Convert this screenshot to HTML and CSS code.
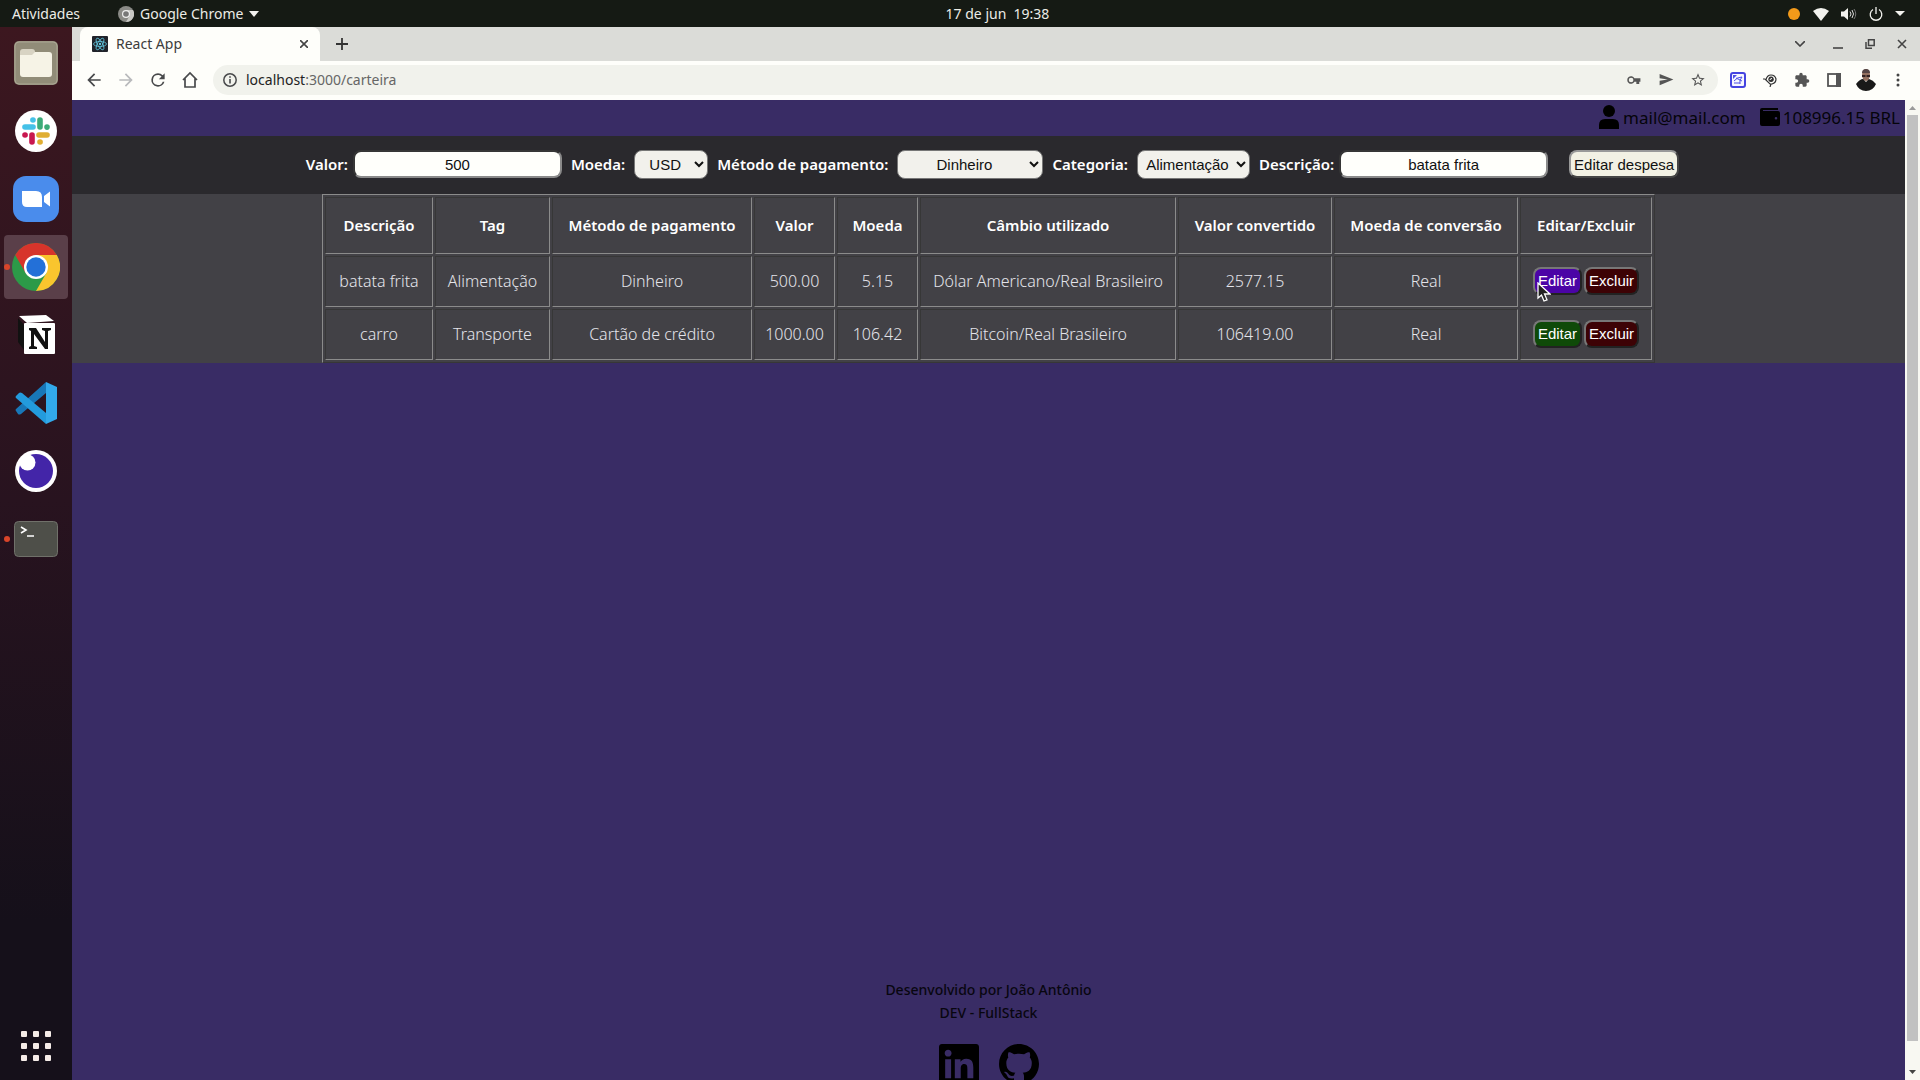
FILE: index.html
```html
<!DOCTYPE html>
<html lang="pt-BR">
<head>
<meta charset="utf-8">
<title>React App</title>
<meta name="viewport" content="width=device-width, initial-scale=1">
<link rel="stylesheet" href="styles.css">
</head>
<body>
<div class="desktop">
  <header class="topbar">
    <div class="topbar-left">
      <span>Atividades</span>
      <span class="app-menu">
        <svg width="16" height="16" viewBox="0 0 16 16"><circle cx="8" cy="8" r="8" fill="#8a8a86"/><path d="M8 4h7A8 8 0 0 1 8 16l3.500-6z" fill="#c8c8c4"/><circle cx="8" cy="8" r="4" fill="#eee"/><circle cx="8" cy="8" r="2.800" fill="#777"/></svg>
        Google Chrome
        <svg width="10" height="6" viewBox="0 0 10 6"><path d="M0 0h10L5 6z" fill="#f2f2ee"/></svg>
      </span>
    </div>
    <time class="clock">17 de jun&nbsp; 19:38</time>
    <div class="topbar-right">
      <svg width="14" height="14" viewBox="0 0 14 14"><circle cx="7" cy="7" r="6" fill="#f39a1a"/></svg>
      <svg width="16" height="14" viewBox="0 0 16 14"><path d="M0 4Q8-2 16 4L8 14z" fill="#f2f2ee"/></svg>
      <svg width="16" height="14" viewBox="0 0 16 14"><path d="M0 4.500h3L7 1v12L3 9.500H0z" fill="#f2f2ee"/><path d="M9 4.500q2 2.500 0 5M11 3q3 4 0 8" fill="none" stroke="#ddd"/><path d="M13 2q3.500 5 0 10" fill="none" stroke="#777"/></svg>
      <svg width="14" height="14" viewBox="0 0 14 14"><path d="M4 2.500a5.800 5.800 0 1 0 6 0M7 0v7" fill="none" stroke="#f2f2ee" stroke-width="1.300"/></svg>
      <svg width="10" height="6" viewBox="0 0 10 6"><path d="M0 0h10L5 5z" fill="#f2f2ee"/></svg>
    </div>
  </header>

  <nav class="dock" aria-label="Dock">
    <div class="dock-item"><svg width="44" height="44" viewBox="0 0 44 44"><rect width="44" height="44" rx="5" fill="#918c78"/><rect x="1" y="1" width="42" height="42" rx="4" fill="none" stroke="#aaa693"/><rect x="6" y="11" width="32" height="25" rx="3" fill="#f6f3e6"/><path d="M6 11q0-3 3-3h9q3 0 3 3l-3 3H6z" fill="#d8d3c3"/></svg></div>
    <div class="dock-item"><svg width="42" height="42" viewBox="0 0 42 42"><circle cx="21" cy="21" r="21" fill="#fff"/><g stroke-width="5.600" stroke-linecap="round"><path d="M25 10v7" stroke="#3cab78"/><path d="M32 17v.1" stroke="#3cab78"/><path d="M10 17h8" stroke="#45c1e8"/><path d="M18 10h-.1" stroke="#45c1e8"/><path d="M17 25v7" stroke="#c8174f"/><path d="M10 25h.1" stroke="#c8174f"/><path d="M24 25h8" stroke="#e0ae32"/><path d="M25 32h.1" stroke="#e0ae32"/></g></svg></div>
    <div class="dock-item"><svg width="46" height="46" viewBox="0 0 46 46"><rect width="46" height="46" rx="13" fill="#4a8cec"/><path d="M9 15h14q6 0 6 6v10H14q-5 0-5-5zM31 20l6-4.500v15L31 26z" fill="#fff"/></svg></div>
    <div class="dock-item dock-active dock-running"><svg width="48" height="48" viewBox="0 0 48 48"><circle cx="24" cy="24" r="24" fill="#2c9a48"/><path d="M3.200 12A24 24 0 0 1 44.800 12H24L13.600 30z" fill="#d7342b"/><path d="M44.800 12A24 24 0 0 1 24 48l10.400-18L24 12z" fill="#f9c52e"/><circle cx="24" cy="24" r="12" fill="#fff"/><circle cx="24" cy="24" r="9.700" fill="#2370d8"/></svg></div>
    <div class="dock-item"><svg width="40" height="42" viewBox="0 0 40 42"><path d="M3 2l27-1 8 6-27 2z" fill="#fff"/><path d="M2 4l6 7v25l-6-8z" fill="#111"/><rect x="8" y="9" width="31" height="31" rx="1" fill="#fff"/><path d="M13 14h7l9 14V17l-3-1v-2h9v2l-3 1v18h-3L18 20v12l3 1v2h-8v-2l2-1V17l-2-1z" fill="#111"/></svg></div>
    <div class="dock-item"><svg width="42" height="42" viewBox="0 0 42 42"><path d="M31 0v11L6 32q-2 1-3 0l-2-3q-1-1 0-2z" fill="#1877b8"/><path d="M1 14l3-3q1-1 3 0l24 20v11L1 16q-1-1 0-2z" fill="#239bdd"/><path d="M31 0l11 5v32l-11 5z" fill="#32a9ea"/></svg></div>
    <div class="dock-item"><svg width="42" height="42" viewBox="0 0 42 42"><circle cx="21" cy="21" r="21" fill="#fff"/><circle cx="21" cy="21" r="17" fill="#4325a8"/><circle cx="12.500" cy="12.500" r="8" fill="#fff"/></svg></div>
    <div class="dock-item dock-running"><svg width="44" height="36" viewBox="0 0 44 36"><rect x=".5" y=".5" width="43" height="35" rx="4" fill="#4e4f49" stroke="#70716a"/><path d="M7 6l5 3-5 3M13 15h7" fill="none" stroke="#fff" stroke-width="1.600"/></svg></div>
    <div class="dock-grid"><svg width="30" height="30" viewBox="0 0 30 30" fill="#f5ece8"><rect width="6" height="6" rx="1"/><rect x="12" width="6" height="6" rx="1"/><rect x="24" width="6" height="6" rx="1"/><rect y="12" width="6" height="6" rx="1"/><rect x="12" y="12" width="6" height="6" rx="1"/><rect x="24" y="12" width="6" height="6" rx="1"/><rect y="24" width="6" height="6" rx="1"/><rect x="12" y="24" width="6" height="6" rx="1"/><rect x="24" y="24" width="6" height="6" rx="1"/></svg></div>
  </nav>

  <div class="browser">
    <div class="tabstrip">
      <div class="tab">
        <svg width="16" height="16" viewBox="0 0 16 16"><rect width="16" height="16" rx="1" fill="#20232a"/><g fill="none" stroke="#61c5dd" stroke-width=".8"><ellipse cx="8" cy="8" rx="6.500" ry="2.500"/><ellipse cx="8" cy="8" rx="6.500" ry="2.500" transform="rotate(60 8 8)"/><ellipse cx="8" cy="8" rx="6.500" ry="2.500" transform="rotate(120 8 8)"/></g><circle cx="8" cy="8" r="1.200" fill="#61c5dd"/></svg>
        <span class="tab-title">React App</span>
        <button class="icon-button" aria-label="Fechar guia"><svg width="8" height="8" viewBox="0 0 8 8"><path d="M0 0l8 8M8 0L0 8" stroke="#444" stroke-width="1.600"/></svg></button>
      </div>
      <button class="icon-button new-tab" aria-label="Nova guia"><svg width="12" height="12" viewBox="0 0 12 12"><path d="M6 0v12M0 6h12" stroke="#333" stroke-width="1.800"/></svg></button>
      <div class="window-controls">
        <button class="icon-button search-tabs" aria-label="Pesquisar guias"><svg width="10" height="6" viewBox="0 0 10 6"><path d="M0 0l5 5 5-5" fill="none" stroke="#444" stroke-width="1.600"/></svg></button>
        <button class="icon-button" aria-label="Minimizar"><svg width="10" height="10" viewBox="0 0 10 10"><path d="M0 9h10" stroke="#444" stroke-width="1.600"/></svg></button>
        <button class="icon-button" aria-label="Restaurar"><svg width="10" height="10" viewBox="0 0 10 10"><path d="M3.500.8h5.700v5.700H3.500zM1 3v6.200h6" fill="none" stroke="#444" stroke-width="1.500"/></svg></button>
        <button class="icon-button" aria-label="Fechar"><svg width="10" height="10" viewBox="0 0 10 10"><path d="M1 1l8 8M9 1L1 9" stroke="#444" stroke-width="1.600"/></svg></button>
      </div>
    </div>

    <div class="toolbar">
      <button class="icon-button" aria-label="Voltar"><svg width="20" height="20" viewBox="0 0 24 24" fill="#48494b"><path d="M20 11H7.830l5.590-5.590L12 4l-8 8 8 8 1.410-1.410L7.830 13H20v-2z"/></svg></button>
      <button class="icon-button" aria-label="Avançar"><svg width="20" height="20" viewBox="0 0 24 24" fill="#b9babc"><path d="M12 4l-1.410 1.410L16.170 11H4v2h12.170l-5.580 5.590L12 20l8-8z"/></svg></button>
      <button class="icon-button" aria-label="Recarregar"><svg width="20" height="20" viewBox="0 0 24 24" fill="#48494b"><path d="M17.650 6.350A7.960 7.960 0 0 0 12 4a8 8 0 1 0 7.730 10h-2.080A6 6 0 1 1 12 6c1.660 0 3.140.69 4.220 1.780L13 11h7V4z"/></svg></button>
      <button class="icon-button" aria-label="Página inicial"><svg width="18" height="18" viewBox="0 0 18 18"><path d="M2 9l7-7 7 7M4 7.500V16h10V7.500" fill="none" stroke="#48494b" stroke-width="1.700"/></svg></button>
      <div class="omnibox">
        <svg width="14" height="14" viewBox="0 0 14 14"><circle cx="7" cy="7" r="6.200" fill="none" stroke="#48494b" stroke-width="1.500"/><path d="M7 6v4.500M7 3.200v1.600" stroke="#48494b" stroke-width="1.600"/></svg>
        <span class="url"><b>localhost</b>:3000/carteira</span>
        <span class="omni-actions">
          <button class="icon-button" aria-label="Senhas"><svg width="14" height="14" viewBox="0 0 24 24" fill="#555"><path d="M23 9H12.700a6.500 6.500 0 1 0 0 6H16v4h5v-4h2zM7 16a4 4 0 1 1 0-8 4 4 0 0 1 0 8z" fill-rule="evenodd"/></svg></button>
          <button class="icon-button" aria-label="Compartilhar"><svg width="15" height="15" viewBox="0 0 24 24" fill="#555"><path d="M1 21l22-9L1 3v7l13 2-13 2z"/></svg></button>
          <button class="icon-button" aria-label="Favoritar"><svg width="16" height="16" viewBox="0 0 24 24" fill="#555"><path d="M22 9.240l-7.190-.62L12 2 9.190 8.630 2 9.240l5.460 4.730L5.820 21 12 17.270 18.180 21l-1.630-7.030L22 9.240zM12 15.400l-3.760 2.270 1-4.280-3.320-2.880 4.380-.38L12 6.100l1.710 4.040 4.380.38-3.320 2.880 1 4.280z"/></svg></button>
        </span>
      </div>
      <button class="icon-button" aria-label="Extensão de captura"><svg width="16" height="16" viewBox="0 0 16 16"><rect x="1" y="1" width="14" height="14" rx="2" fill="#f7f7ff" stroke="#4544e0" stroke-width="2"/><path d="M4 9q3-4 8-4-3 3-2 7M6 6l6 3M4 11h6" fill="none" stroke="#4f50e4"/><path d="M3 3h4L3 7z" fill="#4f50e4"/></svg></button>
      <button class="icon-button" aria-label="Extensão"><svg width="14" height="14" viewBox="0 0 14 14"><path d="M3 7q1-5 5-5t5 4q0 4-4 5H7L2 6H0M8 11l-1 3" fill="none" stroke="#333" stroke-width="1.200"/><path d="M8 3.500a2.800 2.800 0 1 0 .1 0" fill="#333"/><path d="M7 7q0-1.500 2-1.500" fill="none" stroke="#fff"/></svg></button>
      <button class="icon-button" aria-label="Extensões"><svg width="16" height="16" viewBox="0 0 24 24" fill="#555"><path d="M20.500 11H19V7c0-1.100-.9-2-2-2h-4V3.500a2.500 2.500 0 0 0-5 0V5H4c-1.100 0-2 .9-2 2v3.800h1.500a2.700 2.700 0 0 1 0 5.400H2V20c0 1.100.9 2 2 2h3.800v-1.500a2.700 2.700 0 0 1 5.400 0V22H17c1.100 0 2-.9 2-2v-4h1.500a2.500 2.500 0 0 0 0-5z"/></svg></button>
      <button class="icon-button" aria-label="Painel lateral"><svg width="14" height="14" viewBox="0 0 14 14"><rect x="1" y="1" width="12" height="12" fill="none" stroke="#555" stroke-width="1.800"/><path d="M9 0h5v14H9z" fill="#555"/></svg></button>
      <button class="icon-button" aria-label="Perfil"><svg width="20" height="22" viewBox="0 0 20 22"><ellipse cx="10" cy="6" rx="4" ry="6" fill="#94705f"/><path d="M6 4q0-4 4-4t4 4z" fill="#544"/><path d="M6 6h3.500v2H6zM10.500 6H14v2h-3.500z" fill="#322"/><path d="M0 15q4-5 7-5l3 3 3-3q4 1 7 5-3 7-10 7T0 15z" fill="#191919"/></svg></button>
      <button class="icon-button" aria-label="Menu"><svg width="4" height="14" viewBox="0 0 4 14" fill="#444"><circle cx="2" cy="2" r="1.500"/><circle cx="2" cy="7" r="1.500"/><circle cx="2" cy="12" r="1.500"/></svg></button>
    </div>

    <div class="viewport">
      <main class="wallet">
        <header class="wallet-header">
          <span class="wallet-info"><svg width="22" height="24" viewBox="0 0 22 24"><circle cx="11" cy="6" r="6"/><path d="M1 24v-4q0-6 6-6h8q6 0 6 6v4z"/></svg>mail@mail.com</span>
          <span class="wallet-info"><svg width="20" height="18" viewBox="0 0 20 18"><path d="M2 0h16v2H3v1h15q2 0 2 2v11q0 2-2 2H2q-2 0-2-2V2q0-2 2-2zm14 9a1.300 1.300 0 1 0 0 2.600A1.300 1.300 0 0 0 16 9z"/></svg>108996.15 BRL</span>
        </header>

        <form class="expense-form">
          <div class="form-group form-group-text">
            <label for="valor">Valor:</label>
            <input class="field" id="valor" type="text" value="500">
          </div>
          <div class="form-group">
            <label for="moeda">Moeda:</label>
            <select class="field field-currency" id="moeda"><option>USD</option></select>
          </div>
          <div class="form-group">
            <label for="metodo">Método de pagamento:</label>
            <select class="field field-method" id="metodo"><option>Dinheiro</option></select>
          </div>
          <div class="form-group">
            <label for="categoria">Categoria:</label>
            <select class="field field-category" id="categoria"><option>Alimentação</option></select>
          </div>
          <div class="form-group form-group-text">
            <label for="descricao">Descrição:</label>
            <input class="field" id="descricao" type="text" value="batata frita">
          </div>
          <button class="submit" type="button">Editar despesa</button>
        </form>

        <div class="expenses">
          <table class="expense-table">
            <colgroup><col class="c-desc"><col class="c-tag"><col class="c-method"><col class="c-value"><col class="c-value"><col class="c-rate"><col class="c-converted"><col class="c-currency"><col class="c-actions"></colgroup>
            <thead>
              <tr><th>Descrição</th><th>Tag</th><th>Método de pagamento</th><th>Valor</th><th>Moeda</th><th>Câmbio utilizado</th><th>Valor convertido</th><th>Moeda de conversão</th><th>Editar/Excluir</th></tr>
            </thead>
            <tbody>
              <tr><td>batata frita</td><td>Alimentação</td><td>Dinheiro</td><td>500.00</td><td>5.15</td><td>Dólar Americano/Real Brasileiro</td><td>2577.15</td><td>Real</td>
                <td><div class="actions"><button class="edit edit-hover" type="button">Editar</button><button class="remove" type="button">Excluir</button>
                <svg class="cursor" width="14" height="20" viewBox="0 0 14 20"><path d="M1 1v15l3.500-3 2.500 6 3-1.200L7.500 12H13z" fill="#222" stroke="#fff" stroke-width="1.300"/></svg></div></td></tr>
              <tr><td>carro</td><td>Transporte</td><td>Cartão de crédito</td><td>1000.00</td><td>106.42</td><td>Bitcoin/Real Brasileiro</td><td>106419.00</td><td>Real</td>
                <td><div class="actions"><button class="edit" type="button">Editar</button><button class="remove" type="button">Excluir</button></div></td></tr>
            </tbody>
          </table>
        </div>

        <footer class="credits">
          <p>Desenvolvido por João Antônio</p>
          <p>DEV - FullStack</p>
          <div class="social">
            <a href="#linkedin" aria-label="LinkedIn"><svg width="40" height="40" viewBox="0 32 448 448"><path d="M416 32H31.900C14.300 32 0 46.500 0 64.300v383.400C0 465.500 14.300 480 31.900 480H416c17.600 0 32-14.500 32-32.300V64.300c0-17.800-14.400-32.300-32-32.300zM135.400 416H69V202.200h66.500V416zm-33.200-243c-21.300 0-38.500-17.300-38.500-38.500S80.900 96 102.200 96c21.200 0 38.500 17.300 38.500 38.500 0 21.300-17.200 38.500-38.500 38.500zm282.100 243h-66.400V312c0-24.800-.5-56.700-34.500-56.700-34.600 0-39.900 27-39.900 54.900V416h-66.400V202.200h63.700v29.200h.9c8.900-16.800 30.600-34.500 62.900-34.500 67.200 0 79.700 44.300 79.700 101.900V416z"/></svg></a>
            <a href="#github" aria-label="GitHub"><svg width="40" height="40" viewBox="0 0 16 16"><path d="M8 0C3.580 0 0 3.580 0 8c0 3.540 2.290 6.530 5.470 7.590.4.070.55-.17.55-.38 0-.19-.01-.82-.01-1.490-2.010.37-2.530-.49-2.690-.94-.09-.23-.48-.94-.82-1.130-.28-.15-.68-.52-.01-.53.63-.01 1.080.58 1.230.82.72 1.210 1.870.87 2.330.66.07-.52.28-.87.51-1.070-1.780-.2-3.640-.89-3.640-3.950 0-.87.31-1.590.82-2.150-.08-.2-.36-1.020.08-2.120 0 0 .67-.21 2.200.82.64-.18 1.320-.27 2-.27s1.360.09 2 .27c1.530-1.040 2.200-.82 2.200-.82.44 1.100.16 1.920.08 2.120.51.56.82 1.270.82 2.150 0 3.070-1.870 3.750-3.650 3.950.29.25.54.73.54 1.480 0 1.070-.01 1.930-.01 2.200 0 .21.15.46.55.38A8.010 8.010 0 0 0 16 8c0-4.420-3.580-8-8-8z"/></svg></a>
          </div>
        </footer>
      </main>
      <div class="scrollbar" aria-hidden="true">
        <svg width="7" height="4" viewBox="0 0 7 4"><path d="M0 4h7L3.500 0z" fill="#999"/></svg>
        <div class="scroll-thumb"></div>
        <svg width="7" height="4" viewBox="0 0 7 4"><path d="M0 0h7L3.500 4z" fill="#444"/></svg>
      </div>
    </div>
  </div>
</div>
</body>
</html>
```

FILE: styles.css
```css
* { box-sizing: border-box; }

body {
  margin: 0;
  font-family: "Noto Sans", "Open Sans", sans-serif;
  font-size: 16px;
}

svg { display: block; flex: none; }

.desktop {
  display: grid;
  grid-template: 27px minmax(0, 1fr) / 72px minmax(0, 1fr);
  height: 100vh;
  overflow: hidden;
}

/* System bar */
.topbar {
  grid-column: 1 / -1;
  display: grid;
  grid-template-columns: 1fr auto 1fr;
  align-items: center;
  padding: 0 15px 0 12px;
  background: #151a14;
  color: #ecece6;
  font-size: 14px;
}
.topbar-left, .app-menu, .topbar-right { display: flex; align-items: center; }
.topbar-left { gap: 38px; }
.app-menu { gap: 6px; }
.clock { padding-left: 78px; }
.topbar-right { justify-content: flex-end; gap: 12px; }

/* Dock */
.dock {
  display: flex;
  flex-direction: column;
  align-items: center;
  gap: 4px;
  padding: 4px 0 16px;
  background: linear-gradient(#3c171f, #28131f 45%, #15101a 85%);
}
.dock-item {
  position: relative;
  display: grid;
  place-items: center;
  width: 64px;
  height: 64px;
  border-radius: 4px;
}
.dock-active { background: #5a3f49; }
.dock-running::before {
  content: "";
  position: absolute;
  left: 0;
  top: 29px;
  width: 6px;
  height: 6px;
  border-radius: 50%;
  background: #d9452a;
}
.dock-grid { margin-top: auto; padding-bottom: 3px; }

/* Browser chrome */
.browser { display: flex; flex-direction: column; min-width: 0; min-height: 0; }

.icon-button {
  display: grid;
  place-items: center;
  width: 32px;
  height: 32px;
  padding: 0;
  border: 0;
  background: none;
}

.tabstrip {
  display: flex;
  align-items: center;
  height: 34px;
  flex: none;
  padding-left: 8px;
  background: #dbdcd8;
}
.tab {
  display: flex;
  align-items: center;
  gap: 8px;
  width: 240px;
  height: 34px;
  padding: 0 0 1px 12px;
  border-radius: 8px 8px 0 0;
  background: #fefefa;
  color: #3c3c3c;
  font-size: 14px;
}
.tab-title { flex: 1; }
.new-tab { margin-left: 6px; }
.window-controls { display: flex; margin-left: auto; padding-right: 2px; }
.search-tabs { margin-right: 6px; }

.toolbar {
  display: flex;
  align-items: center;
  height: 39px;
  flex: none;
  padding: 0 6px 2px;
  background: #fefefa;
}
.omnibox {
  display: flex;
  flex: 1;
  align-items: center;
  gap: 9px;
  height: 30px;
  margin: 0 4px 0 7px;
  padding: 0 4px 0 10px;
  border-radius: 15px;
  background: #f1f2ec;
  color: #666;
  font-size: 14px;
}
.url { flex: 1; }
.url b { color: #222; font-weight: 400; }
.omni-actions { display: flex; }

.viewport { display: flex; flex: 1; min-height: 0; }

.scrollbar {
  display: flex;
  flex-direction: column;
  align-items: center;
  width: 15px;
  gap: 5px;
  padding: 6px 2px;
  background: #f8f8f2;
}
.scroll-thumb { width: 11px; height: 926px; margin-bottom: auto; background: #c1c1c1; }

/* Wallet page */
.wallet {
  display: flex;
  flex: 1;
  flex-direction: column;
  min-width: 0;
  background: #392c65;
  overflow: hidden;
}
.wallet-header {
  display: flex;
  justify-content: flex-end;
  gap: 14px;
  height: 36px;
  flex: none;
  padding: 0 5px 2px;
  color: #05040a;
  font-size: 17px;
}
.wallet-info { display: flex; align-items: center; gap: 3px; }

.expense-form {
  display: flex;
  justify-content: center;
  align-items: center;
  gap: 9px;
  min-height: 58px;
  flex: none;
  padding: 0 0 2px 8px;
  background: #2a292d;
  color: #fff;
  font-size: 15px;
  font-weight: 600;
}
.form-group { display: flex; align-items: center; gap: 9px; }
.form-group-text { gap: 5px; }
.field {
  height: 29px;
  border: 1px solid #777;
  border-radius: 8px;
  background: #f2f1ec;
  color: #111;
  font: 15px "Liberation Sans", Arial, sans-serif;
  text-align: center;
}
input.field {
  width: 209px;
  height: 28px;
  border: 2px inset #8a8a8a;
  background: #fffffb;
}
.field-currency { width: 74px; }
.field-method { width: 146px; }
.field-category { width: 113px; }
.submit {
  height: 28px;
  margin-left: 12px;
  padding: 0 3px;
  border: 2px outset #999;
  border-radius: 8px;
  background: #f2f1e4;
  color: #111;
  font: 15px "Liberation Sans", Arial, sans-serif;
}

.expenses { display: flex; justify-content: center; background: #424146; flex: none; }
.expense-table {
  border: 1px outset #8b8b8b;
  border-spacing: 2px;
  color: #e4e4ea;
  font-weight: 300;
  text-align: center;
}
.expense-table th, .expense-table td {
  height: 51px;
  padding: 0 0 2px;
  border: 1px inset #8b8b8b;
  white-space: nowrap;
}
.expense-table th { height: 57px; color: #fff; font-size: 15px; font-weight: 600; }
.c-desc { width: 108px; }
.c-tag { width: 115px; }
.c-method { width: 200px; }
.c-value { width: 81px; }
.c-rate { width: 256px; }
.c-converted { width: 154px; }
.c-currency { width: 184px; }
.c-actions { width: 132px; }

.actions { position: relative; display: flex; justify-content: center; gap: 2px; }
.edit, .remove {
  height: 28px;
  padding: 0 3px;
  border: 2px outset #777;
  border-radius: 8px;
  color: #fff;
  font: 15px "Liberation Sans", Arial, sans-serif;
}
.edit { background: #0f4a08; }
.edit-hover { background: #4b04a6; }
.remove { background: #3d0205; }
.cursor { position: absolute; left: 16px; top: 15px; }

.credits {
  margin-top: auto;
  color: #08060f;
  font-size: 14px;
  font-weight: 500;
  line-height: 23px;
  text-align: center;
}
.credits p { margin: 0; }
.social { display: flex; justify-content: center; gap: 20px; height: 56px; padding-top: 20px; }
.social a { color: #08060f; }
```
